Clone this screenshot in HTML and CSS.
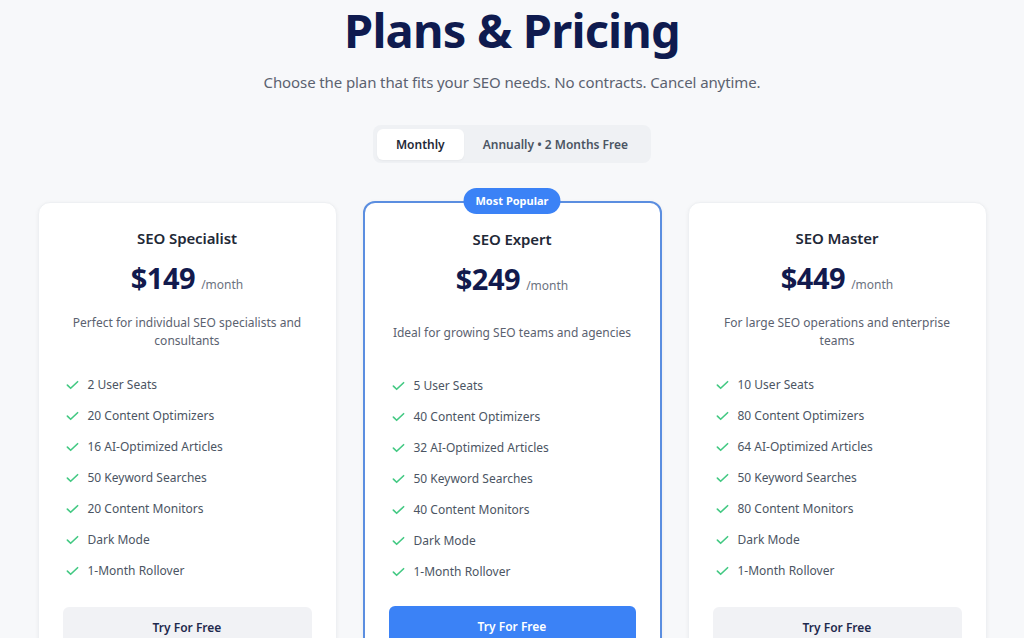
FILE: index.html
```html
<!DOCTYPE html>
<html lang="en">
<head>
<meta charset="utf-8">
<title>Plans &amp; Pricing</title>
<link rel="stylesheet" href="styles.css">
</head>
<body>
<main class="pricing">
  <h1 class="title">Plans &amp; Pricing</h1>
  <p class="subtitle">Choose the plan that fits your SEO needs. No contracts. Cancel anytime.</p>

  <div class="toggle">
    <button class="toggle-btn active">Monthly</button>
    <button class="toggle-btn">Annually • 2 Months Free</button>
  </div>

  <div class="cards">
    <section class="card">
      <h2 class="plan">SEO Specialist</h2>
      <div class="price"><span class="amount">$149</span><span class="per">/month</span></div>
      <p class="desc">Perfect for individual SEO specialists and consultants</p>
      <ul class="features">
        <li><svg class="check" viewBox="0 0 14 10"><path d="M1.5 5.2 5 8.5 12.5 1.5"/></svg>2 User Seats</li>
        <li><svg class="check" viewBox="0 0 14 10"><path d="M1.5 5.2 5 8.5 12.5 1.5"/></svg>20 Content Optimizers</li>
        <li><svg class="check" viewBox="0 0 14 10"><path d="M1.5 5.2 5 8.5 12.5 1.5"/></svg>16 AI-Optimized Articles</li>
        <li><svg class="check" viewBox="0 0 14 10"><path d="M1.5 5.2 5 8.5 12.5 1.5"/></svg>50 Keyword Searches</li>
        <li><svg class="check" viewBox="0 0 14 10"><path d="M1.5 5.2 5 8.5 12.5 1.5"/></svg>20 Content Monitors</li>
        <li><svg class="check" viewBox="0 0 14 10"><path d="M1.5 5.2 5 8.5 12.5 1.5"/></svg>Dark Mode</li>
        <li><svg class="check" viewBox="0 0 14 10"><path d="M1.5 5.2 5 8.5 12.5 1.5"/></svg>1-Month Rollover</li>
      </ul>
      <button class="cta">Try For Free</button>
    </section>

    <section class="card featured">
      <span class="badge">Most Popular</span>
      <h2 class="plan">SEO Expert</h2>
      <div class="price"><span class="amount">$249</span><span class="per">/month</span></div>
      <p class="desc">Ideal for growing SEO teams and agencies</p>
      <ul class="features">
        <li><svg class="check" viewBox="0 0 14 10"><path d="M1.5 5.2 5 8.5 12.5 1.5"/></svg>5 User Seats</li>
        <li><svg class="check" viewBox="0 0 14 10"><path d="M1.5 5.2 5 8.5 12.5 1.5"/></svg>40 Content Optimizers</li>
        <li><svg class="check" viewBox="0 0 14 10"><path d="M1.5 5.2 5 8.5 12.5 1.5"/></svg>32 AI-Optimized Articles</li>
        <li><svg class="check" viewBox="0 0 14 10"><path d="M1.5 5.2 5 8.5 12.5 1.5"/></svg>50 Keyword Searches</li>
        <li><svg class="check" viewBox="0 0 14 10"><path d="M1.5 5.2 5 8.5 12.5 1.5"/></svg>40 Content Monitors</li>
        <li><svg class="check" viewBox="0 0 14 10"><path d="M1.5 5.2 5 8.5 12.5 1.5"/></svg>Dark Mode</li>
        <li><svg class="check" viewBox="0 0 14 10"><path d="M1.5 5.2 5 8.5 12.5 1.5"/></svg>1-Month Rollover</li>
      </ul>
      <button class="cta primary">Try For Free</button>
    </section>

    <section class="card">
      <h2 class="plan">SEO Master</h2>
      <div class="price"><span class="amount">$449</span><span class="per">/month</span></div>
      <p class="desc">For large SEO operations and enterprise teams</p>
      <ul class="features">
        <li><svg class="check" viewBox="0 0 14 10"><path d="M1.5 5.2 5 8.5 12.5 1.5"/></svg>10 User Seats</li>
        <li><svg class="check" viewBox="0 0 14 10"><path d="M1.5 5.2 5 8.5 12.5 1.5"/></svg>80 Content Optimizers</li>
        <li><svg class="check" viewBox="0 0 14 10"><path d="M1.5 5.2 5 8.5 12.5 1.5"/></svg>64 AI-Optimized Articles</li>
        <li><svg class="check" viewBox="0 0 14 10"><path d="M1.5 5.2 5 8.5 12.5 1.5"/></svg>50 Keyword Searches</li>
        <li><svg class="check" viewBox="0 0 14 10"><path d="M1.5 5.2 5 8.5 12.5 1.5"/></svg>80 Content Monitors</li>
        <li><svg class="check" viewBox="0 0 14 10"><path d="M1.5 5.2 5 8.5 12.5 1.5"/></svg>Dark Mode</li>
        <li><svg class="check" viewBox="0 0 14 10"><path d="M1.5 5.2 5 8.5 12.5 1.5"/></svg>1-Month Rollover</li>
      </ul>
      <button class="cta">Try For Free</button>
    </section>
  </div>
</main>
</body>
</html>
```

FILE: styles.css
```css
* { box-sizing: border-box; }

html, body {
  margin: 0;
  padding: 0;
  background: #f7f8fa;
  font-family: "Noto Sans", "Open Sans", sans-serif;
  color: #1f2937;
  overflow: hidden;
}

.pricing {
  display: flex;
  flex-direction: column;
  align-items: center;
}

.title {
  margin: 0;
  font-size: 47px;
  line-height: 60px;
  letter-spacing: -0.8px;
  font-weight: 700;
  color: #0f1b4f;
}

.subtitle {
  margin: 10px 0 0;
  font-size: 15px;
  line-height: 24px;
  letter-spacing: -0.1px;
  color: #5b6270;
}

.toggle {
  margin-top: 31px;
  display: flex;
  padding: 4px 4px 3px;
  background: #eff1f4;
  border-radius: 8px;
}

.toggle-btn {
  font-family: inherit;
  font-size: 12px;
  font-weight: 600;
  line-height: 31px;
  height: 31px;
  padding: 0 19px;
  border: none;
  background: transparent;
  border-radius: 6px;
  color: #4b5563;
  cursor: pointer;
}

.toggle-btn.active {
  background: #ffffff;
  color: #1f2937;
  box-shadow: 0 1px 2px rgba(0, 0, 0, 0.04);
}

.cards {
  margin-top: 39px;
  display: grid;
  grid-template-columns: repeat(3, 299px);
  gap: 26px;
  align-items: start;
}

.card {
  position: relative;
  background: #ffffff;
  border: 1px solid #eef0f3;
  border-radius: 12px;
  padding: 24px;
  display: flex;
  flex-direction: column;
  align-items: stretch;
  box-shadow: 0 1px 4px rgba(16, 24, 40, 0.05);
}

.card.featured {
  border: 2px solid #5b8ee0;
  margin-top: -1px;
  padding-top: 25px;
}

.badge {
  position: absolute;
  top: -15px;
  left: 50%;
  transform: translateX(-50%);
  background: #3b82f6;
  color: #ffffff;
  font-size: 11px;
  font-weight: 700;
  line-height: 26px;
  padding: 0 12px;
  border-radius: 13px;
  white-space: nowrap;
}

.plan {
  margin: 0;
  text-align: center;
  font-size: 15px;
  line-height: 22px;
  letter-spacing: -0.1px;
  font-weight: 600;
  color: #1f2937;
}

.price {
  margin-top: 10px;
  display: flex;
  justify-content: center;
  align-items: baseline;
  gap: 6px;
}

.amount {
  font-size: 29px;
  line-height: 38px;
  letter-spacing: -0.5px;
  font-weight: 700;
  color: #121a4d;
}

.per {
  font-size: 12px;
  color: #6b7280;
}

.desc {
  margin: 17px 0 0;
  min-height: 36px;
  display: flex;
  align-items: center;
  justify-content: center;
  text-align: center;
  font-size: 12px;
  line-height: 18px;
  color: #5b6270;
  padding: 0 4px;
}

.features {
  list-style: none;
  margin: 25px 0 0;
  padding: 0 0 0 3px;
  display: flex;
  flex-direction: column;
  gap: 12px;
}

.features li {
  display: flex;
  align-items: center;
  gap: 9px;
  font-size: 12px;
  line-height: 19px;
  color: #4b5563;
}

.check {
  width: 13px;
  height: 10px;
  flex: none;
  fill: none;
  stroke: #43c983;
  stroke-width: 1.8;
  stroke-linecap: round;
  stroke-linejoin: round;
}

.cta {
  margin-top: 27px;
  height: 40px;
  border: none;
  border-radius: 6px;
  background: #f1f2f5;
  font-family: inherit;
  font-size: 12px;
  font-weight: 600;
  color: #1f2a4d;
  cursor: pointer;
}

.cta.primary {
  margin-top: 25px;
  background: #3b82f6;
  color: #ffffff;
}
```
